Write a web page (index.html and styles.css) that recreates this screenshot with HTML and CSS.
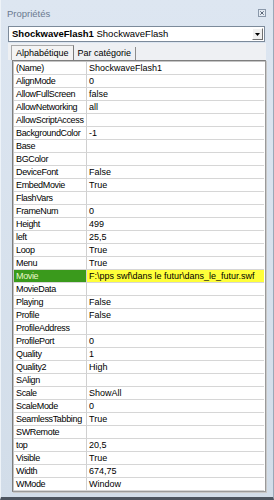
FILE: index.html
```html
<!DOCTYPE html>
<html lang="fr">
<head>
<meta charset="utf-8">
<title>Propriétés</title>
<link rel="stylesheet" href="styles.css">
</head>
<body>
<div class="window">
  <div class="titlebar">
    <span class="title">Propriétés</span>
    <span class="close"><svg width="8" height="8" viewBox="0 0 8 8"><rect x="0.5" y="0.5" width="7" height="7" fill="#e4ebf3" stroke="#8a98aa"/><path d="M2.3 2.3 L5.7 5.7 M5.7 2.3 L2.3 5.7" stroke="#5a6678" stroke-width="1"/></svg></span>
  </div>
  <div class="panel">
    <div class="combo">
      <span class="combo-text"><b>ShockwaveFlash1</b> ShockwaveFlash</span>
      <span class="combo-btn"><svg width="5" height="3" viewBox="0 0 5 3"><path d="M0 0 H5 L2.5 3 Z" fill="#000"/></svg></span>
    </div>
    <div class="tabs">
      <span class="tab active">Alphabétique</span>
      <span class="tab">Par catégorie</span>
    </div>
    <div class="grid">
      <div class="n">(Name)</div><div class="v">ShockwaveFlash1</div>
      <div class="n">AlignMode</div><div class="v">0</div>
      <div class="n">AllowFullScreen</div><div class="v">false</div>
      <div class="n">AllowNetworking</div><div class="v">all</div>
      <div class="n">AllowScriptAccess</div><div class="v"></div>
      <div class="n">BackgroundColor</div><div class="v">-1</div>
      <div class="n">Base</div><div class="v"></div>
      <div class="n">BGColor</div><div class="v"></div>
      <div class="n">DeviceFont</div><div class="v">False</div>
      <div class="n">EmbedMovie</div><div class="v">True</div>
      <div class="n">FlashVars</div><div class="v"></div>
      <div class="n">FrameNum</div><div class="v">0</div>
      <div class="n">Height</div><div class="v">499</div>
      <div class="n">left</div><div class="v">25,5</div>
      <div class="n">Loop</div><div class="v">True</div>
      <div class="n">Menu</div><div class="v">True</div>
      <div class="n sel">Movie</div><div class="v hl">F:\pps swf\dans le futur\dans_le_futur.swf</div>
      <div class="n">MovieData</div><div class="v"></div>
      <div class="n">Playing</div><div class="v">False</div>
      <div class="n">Profile</div><div class="v">False</div>
      <div class="n">ProfileAddress</div><div class="v"></div>
      <div class="n">ProfilePort</div><div class="v">0</div>
      <div class="n">Quality</div><div class="v">1</div>
      <div class="n">Quality2</div><div class="v">High</div>
      <div class="n">SAlign</div><div class="v"></div>
      <div class="n">Scale</div><div class="v">ShowAll</div>
      <div class="n">ScaleMode</div><div class="v">0</div>
      <div class="n">SeamlessTabbing</div><div class="v">True</div>
      <div class="n">SWRemote</div><div class="v"></div>
      <div class="n">top</div><div class="v">20,5</div>
      <div class="n">Visible</div><div class="v">True</div>
      <div class="n">Width</div><div class="v">674,75</div>
      <div class="n">WMode</div><div class="v">Window</div>
    </div>
  </div>
</div>
</body>
</html>
```
FILE: styles.css
```css
* { box-sizing: border-box; }
html, body { margin: 0; padding: 0; }
body {
  width: 274px;
  height: 500px;
  overflow: hidden;
  font-family: "Liberation Sans", Arial, sans-serif;
  font-size: 9px;
  color: #000;
  background: #d3deeb;
}
.window {
  height: 500px;
  display: flex;
  flex-direction: column;
  background: linear-gradient(#dde6f1, #d2dde9);
  border-left: 1px solid #eef3f8;
  border-right: 1px solid #9aa8b8;
  border-bottom: 3px solid #4d5560;
}
.titlebar {
  height: 26px;
  display: flex;
  align-items: flex-start;
  justify-content: space-between;
  padding: 8px 7px 0 6px;
}
.title {
  color: #6a7a90;
  font-size: 9.5px;
  line-height: 11px;
}
.close {
  display: flex;
  margin-top: 1px;
}
.panel {
  flex: 1;
  display: flex;
  flex-direction: column;
  padding: 0 8px 5px 7px;
}
.combo {
  height: 16px;
  display: flex;
  align-items: center;
  justify-content: space-between;
  background: #fff;
  border: 1px solid #7c8a9a;
  padding: 0 1px 0 3px;
}
.combo-text { font-size: 9.5px; line-height: 14px; white-space: nowrap; }
.combo-btn {
  width: 11px;
  height: 12px;
  display: flex;
  align-items: center;
  justify-content: center;
  background: #f0f0f0;
  border: 1px solid;
  border-color: #fff #707070 #707070 #fff;
}
.tabs {
  display: flex;
  align-items: flex-end;
  height: 17px;
  padding-left: 3px;
  background: #eef0f3;
  margin: 1px -1px 0 0;
}
.tab {
  height: 13px;
  line-height: 12px;
  padding: 0 4px 0 4px;
  border-right: 1px solid #8c8c8c;
  white-space: nowrap;
}
.tab.active {
  height: 15px;
  line-height: 14px;
  padding: 0 4px 0 4px;
  border: 1px solid #a9a9a9;
  border-bottom: none;
  border-right: 1px solid #7a7a7a;
  background: #f3f3f3;
}
.grid {
  flex: 1;
  display: grid;
  grid-template-columns: 73px 1fr;
  grid-auto-rows: 13px;
  align-content: start;
  background: #fff;
  border: 1px solid #7e7e7e;
  border-right-color: #9a9a9a;
  border-bottom-color: #9a9a9a;
  box-shadow: 1px 1px 0 #c8c8c8, inset 1px 1px 0 #c4c4c4;
  margin: 0 -1px 0 4px;
  padding: 1px 1px 0 1px;
}
.n, .v {
  height: 13px;
  line-height: 12px;
  border-bottom: 1px solid #d6d6d6;
  white-space: nowrap;
  overflow: hidden;
  padding-left: 2px;
}
.n { border-right: 1px solid #d0d0d0; letter-spacing: -0.35px; }
.v { padding-left: 2px; }
.n.sel { background: #3a9a1c; color: #e9f7c8; }
.v.hl { background: #ffff3a; }
```
